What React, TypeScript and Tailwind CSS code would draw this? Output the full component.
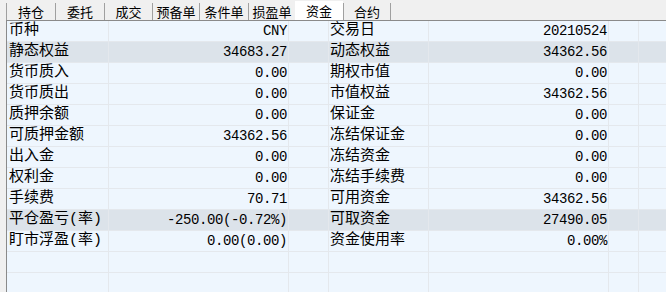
import React from 'react';

const tabs = [
  { name: '持仓', w: 'w-[49px]' },
  { name: '委托', w: 'w-[49px]' },
  { name: '成交', w: 'w-[48px]' },
  { name: '预备单', w: 'w-[47px]' },
  { name: '条件单', w: 'w-[49px]' },
  { name: '损盈单', w: 'w-[47px]' },
  { name: '资金', w: 'w-[48px]', active: true },
  { name: '合约', w: 'w-[48px]' },
];

// label, value, label, value, shaded
const rows: [string, string, string, string, boolean?][] = [
  ['币种', 'CNY', '交易日', '20210524'],
  ['静态权益', '34683.27', '动态权益', '34362.56', true],
  ['货币质入', '0.00', '期权市值', '0.00'],
  ['货币质出', '0.00', '市值权益', '34362.56'],
  ['质押余额', '0.00', '保证金', '0.00'],
  ['可质押金额', '34362.56', '冻结保证金', '0.00'],
  ['出入金', '0.00', '冻结资金', '0.00'],
  ['权利金', '0.00', '冻结手续费', '0.00'],
  ['手续费', '70.71', '可用资金', '34362.56'],
  ['平仓盈亏(率)', '-250.00(-0.72%)', '可取资金', '27490.05', true],
  ['盯市浮盈(率)', '0.00(0.00)', '资金使用率', '0.00%'],
  ['', '', '', ''],
  ['', '', '', ''],
];

const monoFont = { fontFamily: '"Liberation Mono", "Noto Sans CJK SC", monospace' };

function Row({ r }: { r: [string, string, string, string, boolean?] }) {
  const [l1, v1, l2, v2, shaded] = r;
  const cell = 'h-[21px] shrink-0 border-r border-b border-[#e4e8ed] leading-[20px] whitespace-nowrap overflow-hidden';
  return (
    <div className={`flex ${shaded ? 'bg-[#dce3ea]' : 'bg-[#eef6fe]'}`}>
      <div className={`${cell} w-[102px] pl-[2px] text-[15px]`} style={monoFont}>{l1}</div>
      <div className={`${cell} w-[180px] pr-[1px] text-right text-[14px] tracking-[-0.4px]`} style={monoFont}>{v1}</div>
      <div className={`${cell} w-[40px]`} />
      <div className={`${cell} w-[100px] pl-[1px] text-[15px]`} style={monoFont}>{l2}</div>
      <div className={`${cell} w-[180px] pr-[1px] text-right text-[14px] tracking-[-0.4px]`} style={monoFont}>{v2}</div>
      <div className={`${cell} w-[30px]`} />
      <div className={`${cell} flex-1 border-r-0`} />
    </div>
  );
}

export default function App() {
  return (
    <div className="w-[666px] h-[292px] overflow-hidden bg-[#f0f0f0] text-black">
      <div className="flex h-[20px] items-end pl-[6px]">
        {tabs.map((t, i) => (
          <div
            key={t.name}
            className={`${t.w} flex items-center justify-center text-[13px] leading-[16px] ${
              t.active ? 'h-[19px] bg-white' : 'h-[17px] border-l border-[#a0a0a0]'
            } ${i === tabs.length - 1 ? 'border-r border-[#a0a0a0]' : ''}`}
            style={{ fontFamily: '"Noto Sans CJK SC", sans-serif' }}
          >
            {t.name}
          </div>
        ))}
      </div>
      <div className="ml-[6px] border-l border-t border-[#8a8a8a]">
        {rows.map((r, i) => (
          <Row key={i} r={r} />
        ))}
      </div>
    </div>
  );
}
